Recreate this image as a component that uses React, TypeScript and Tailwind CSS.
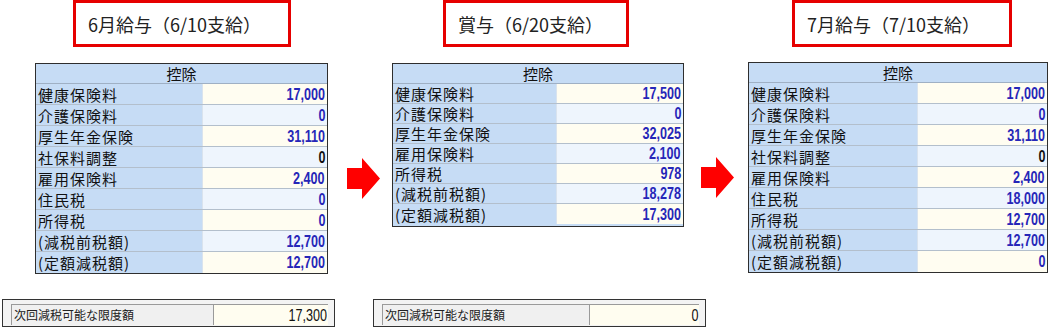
import React from "react";

type Row = { label: string; value: string; black?: boolean };

const jp = "font-['Noto_Sans_CJK_JP','Noto_Sans',sans-serif]";

const june: Row[] = [
  { label: "健康保険料", value: "17,000" },
  { label: "介護保険料", value: "0" },
  { label: "厚生年金保険", value: "31,110" },
  { label: "社保料調整", value: "0", black: true },
  { label: "雇用保険料", value: "2,400" },
  { label: "住民税", value: "0" },
  { label: "所得税", value: "0" },
  { label: "(減税前税額)", value: "12,700" },
  { label: "(定額減税額)", value: "12,700" },
];

const bonus: Row[] = [
  { label: "健康保険料", value: "17,500" },
  { label: "介護保険料", value: "0" },
  { label: "厚生年金保険", value: "32,025" },
  { label: "雇用保険料", value: "2,100" },
  { label: "所得税", value: "978" },
  { label: "(減税前税額)", value: "18,278" },
  { label: "(定額減税額)", value: "17,300" },
];

const july: Row[] = [
  { label: "健康保険料", value: "17,000" },
  { label: "介護保険料", value: "0" },
  { label: "厚生年金保険", value: "31,110" },
  { label: "社保料調整", value: "0", black: true },
  { label: "雇用保険料", value: "2,400" },
  { label: "住民税", value: "18,000" },
  { label: "所得税", value: "12,700" },
  { label: "(減税前税額)", value: "12,700" },
  { label: "(定額減税額)", value: "0" },
];

function Num({ value, black, bold = true }: { value: string; black?: boolean; bold?: boolean }) {
  return (
    <span
      className={
        "inline-block origin-right scale-x-[0.74] text-[17px] leading-none font-['Liberation_Sans',sans-serif] " +
        (bold ? "font-bold " : "") +
        (black ? "text-[#111]" : "text-[#2626b8]")
      }
    >
      {value}
    </span>
  );
}

function Title({ text, className }: { text: string; className: string }) {
  return (
    <div
      className={`h-[47px] border-[3px] border-[#e60000] flex items-center pl-[12px] text-[18px] leading-none text-[#222] ${jp} ${className}`}
    >
      {text}
    </div>
  );
}

function Arrow({ className }: { className: string }) {
  return (
    <svg className={className} viewBox="0 0 33 41" width="33" height="41">
      <polygon points="0,10 15,10 15,0 33,20.5 15,41 15,31 0,31" fill="#ff0000" />
    </svg>
  );
}

function Deductions({
  rows,
  labelW,
  rowH,
  className,
}: {
  rows: Row[];
  labelW: string;
  rowH: string;
  className: string;
}) {
  return (
    <div className={`border border-[#2e2e2e] bg-[#c6dcf5] ${jp} ${className}`}>
      <div className="h-[20px] flex items-center justify-center text-[15px] leading-none text-[#111] border-b border-[#9fb0c4]">
        控除
      </div>
      {rows.map((r, i) => (
        <div key={r.label} className={`flex ${rowH} border-b border-[#b3bfcc] last:border-b-0`}>
          <div className={`${labelW} bg-[#c6dcf5] flex items-center pl-[2px] text-[15px] tracking-[1px] leading-none text-[#111]`}>
            {r.label}
          </div>
          <div
            className={`flex-1 flex items-center justify-end pr-[2px] border-l border-[#d9e3ee] ${
              i % 2 === 0 ? "bg-[#fffdf1]" : "bg-[#eef5fd]"
            }`}
          >
            <Num value={r.value} black={r.black} />
          </div>
        </div>
      ))}
    </div>
  );
}

function Limit({ value, labelW, className }: { value: string; labelW: string; className: string }) {
  return (
    <div className={`h-[28px] border border-[#333] bg-[#f3f3f3] flex items-end pl-[8px] pr-[6px] pb-[1px] ${jp} ${className}`}>
      <div className={`${labelW} h-[21px] border-t border-l border-[#9a9a9a] bg-[#f0f0f0] flex items-center pl-[2px] text-[12px] leading-none text-[#222]`}>
        次回減税可能な限度額
      </div>
      <div className="flex-1 h-[21px] border-t border-l border-[#9a9a9a] bg-[#fffdf0] flex items-center justify-end pr-[1px]">
        <Num value={value} black bold={false} />
      </div>
    </div>
  );
}

export default function App() {
  return (
    <div className="w-[1050px] h-[329px] bg-white flex overflow-hidden">
      {/* 6月給与 */}
      <div className="w-[340px] h-full flex flex-col">
        <Title text="6月給与（6/10支給）" className="ml-[73px] w-[218px]" />
        <Deductions rows={june} labelW="w-[166px]" rowH="h-[21px]" className="mt-[16px] ml-[35px] w-[293px]" />
        <Limit value="17,300" labelW="w-[202px]" className="mt-auto mb-[2px] ml-[2px] w-[333px]" />
      </div>

      {/* 賞与 */}
      <div className="w-[350px] h-full flex flex-col">
        <Title text="賞与（6/20支給）" className="ml-[103px] w-[186px]" />
        <div className="mt-[16px] flex items-start">
          <Arrow className="ml-[7px] mt-[95px]" />
          <Deductions rows={bonus} labelW="w-[163px]" rowH="h-[20px]" className="ml-[12px] w-[292px] pb-[2px]" />
        </div>
        <Limit value="0" labelW="w-[207px]" className="mt-auto mb-[2px] ml-[33px] w-[333px]" />
      </div>

      {/* 7月給与 */}
      <div className="w-[360px] h-full flex flex-col">
        <Title text="7月給与（7/10支給）" className="ml-[102px] w-[220px]" />
        <div className="mt-[15px] flex items-start">
          <Arrow className="ml-[11px] mt-[95px]" />
          <Deductions rows={july} labelW="w-[168px]" rowH="h-[21px]" className="ml-[14px] w-[300px]" />
        </div>
      </div>
    </div>
  );
}
